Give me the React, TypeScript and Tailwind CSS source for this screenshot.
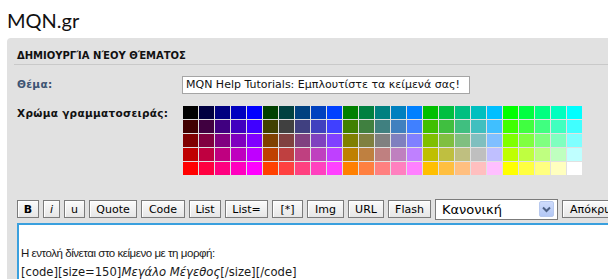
import React from "react";

const LV = ["00", "40", "80", "BF", "FF"];

function Btn({ w, children, className = "" }: { w: string; children: React.ReactNode; className?: string }) {
  return (
    <div
      className={`${w} h-[18px] shrink-0 flex items-center justify-center border border-[#7b7b7b] bg-gradient-to-b from-[#fbfbfb] to-[#e6e6e6] shadow-[inset_1px_1px_0_#ffffff] text-[11px] text-black leading-none ${className}`}
      style={{ fontFamily: '"DejaVu Sans", sans-serif' }}
    >
      {children}
    </div>
  );
}

export default function App() {
  const rows = [0, 1, 2, 3, 4];
  const cols = Array.from({ length: 25 }, (_, i) => i);
  return (
    <div className="w-[608px] h-[279px] bg-white overflow-hidden">
      <div
        className="h-[38px] pt-[10px] pl-[7px] text-[20px] leading-[20px] text-[#111]"
        style={{ fontFamily: 'Lato, sans-serif' }}
      >
        MQN.gr
      </div>
      <div className="ml-[7px] bg-[#e1e1e1] rounded-tl-[4px] h-[241px]" style={{ fontFamily: '"DejaVu Sans", sans-serif' }}>
        <div className="pt-[12px] pl-[10px] text-[10px] leading-[12px] font-bold text-[#111]">
          ΔΗΜΙΟΥΡΓΊΑ ΝΈΟΥ ΘΈΜΑΤΟΣ
        </div>
        <div className="mt-[2px] ml-[7px] h-px bg-[#c9c9c9]" />
        <div className="flex items-center mt-[11px] pl-[10px]">
          <div className="w-[165px] text-[10.5px] font-bold text-[#3d5473] tracking-[0.3px]">Θέμα:</div>
          <div className="w-[288px] h-[18px] border border-[#a5a5a5] bg-white flex items-center pl-[3px] text-[11px] text-[#111] whitespace-nowrap overflow-hidden">
            MQN Help Tutorials: Εμπλουτίστε τα κείμενά σας!
          </div>
        </div>
        <div className="flex mt-[12px] pl-[10px]">
          <div className="w-[166px] pt-[1px] text-[10.5px] leading-[13px] font-bold text-[#111] tracking-[0.3px]">
            Χρώμα γραμματοσειράς:
          </div>
          <div className="flex flex-col gap-px">
            {rows.map((r) => (
              <div key={r} className="flex gap-px">
                {cols.map((c) => (
                  <div
                    key={c}
                    className="w-[15px] h-[13px]"
                    style={{ background: `#${LV[r]}${LV[Math.floor(c / 5)]}${LV[c % 5]}` }}
                  />
                ))}
              </div>
            ))}
          </div>
        </div>
        <div className="flex items-center gap-[4px] mt-[23px] pl-[10px] h-[22px]">
          <Btn w="w-[22px]" className="font-bold">B</Btn>
          <Btn w="w-[17px]" className="italic">i</Btn>
          <Btn w="w-[21px]">u</Btn>
          <Btn w="w-[48px]">Quote</Btn>
          <Btn w="w-[44px]">Code</Btn>
          <Btn w="w-[32px]">List</Btn>
          <Btn w="w-[43px]">List=</Btn>
          <Btn w="w-[31px]">[*]</Btn>
          <Btn w="w-[37px]">Img</Btn>
          <Btn w="w-[36px]">URL</Btn>
          <Btn w="w-[43px]">Flash</Btn>
          <div className="w-[123px] h-[21px] shrink-0 border border-[#7b7b7b] bg-white flex items-center pl-[6px] pr-[3px]">
            <span className="flex-1 text-[13px] text-black leading-none">Κανονική</span>
            <div className="w-[15px] h-[16px] rounded-[2px] bg-gradient-to-b from-[#cfdcfc] to-[#b3c7f5] border border-[#b8c9ee] flex items-center justify-center">
              <svg width="9" height="7" viewBox="0 0 9 7">
                <path d="M1 1.5 L4.5 5 L8 1.5" fill="none" stroke="#4d6185" strokeWidth="2" />
              </svg>
            </div>
          </div>
          <Btn w="w-[60px]" className="justify-start pl-[7px]">Απόκρυψη</Btn>
        </div>
        <div className="mt-[3px] ml-[10px] h-[60px] border-t-2 border-l-2 border-[#3aa0de] bg-white pl-[2px] leading-[19px] text-[#1a1a1a] whitespace-nowrap">
          <div className="h-[19px]" />
          <div className="text-[11.5px] tracking-[-0.45px]" style={{ fontFamily: '"Liberation Sans", sans-serif' }}>
            Η εντολή δίνεται στο κείμενο με τη μορφή:
          </div>
          <div className="text-[11.6px]">
            [code][size=150]<span className="italic">Μεγάλο Μέγεθος</span>[/size][/code]
          </div>
        </div>
      </div>
    </div>
  );
}
